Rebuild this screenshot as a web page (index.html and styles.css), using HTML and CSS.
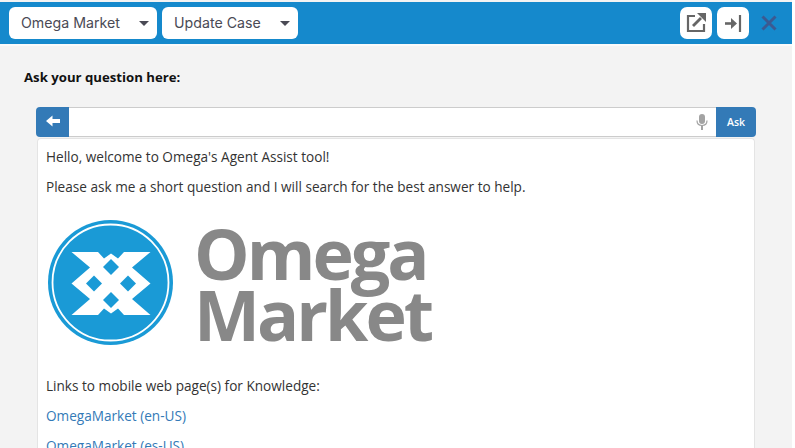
FILE: index.html
```html
<!DOCTYPE html>
<html lang="en">
<head>
  <meta charset="UTF-8" />
  <title>Agent Assist</title>
  <link rel="stylesheet" href="styles.css">
</head>
<body>
  <div class="page">
    <div class="topbar">
      <div class="select select-market">Omega Market<span class="caret"></span></div>
      <div class="select select-case">Update Case<span class="caret"></span></div>
      <div class="tools">
        <div class="tool-btn">
          <svg width="24" height="24" viewBox="0 0 24 24" fill="none" stroke="#666" stroke-width="2.2">
            <path d="M11 5H4V20H20V13"/>
            <path d="M9 15L17 7" stroke-width="2.800"/>
            <path d="M13 2H22V11Z" fill="#666" stroke="none"/>
          </svg>
        </div>
        <div class="tool-btn">
          <svg width="22" height="22" viewBox="0 0 22 22" fill="none" stroke="#666">
            <path d="M3 11.500H11" stroke-width="2.600"/>
            <path d="M9 6L15 11.500L9 17Z" fill="#666" stroke="none"/>
            <path d="M18 3V20" stroke-width="2.200"/>
          </svg>
        </div>
        <svg class="close-icon" width="18" height="18" viewBox="0 0 18 18" stroke="#3b5a92" stroke-width="3" fill="none">
          <path d="M2.500 2.500L15.500 15.500M15.500 2.500L2.500 15.500"/>
        </svg>
      </div>
    </div>

    <div class="main">
      <div class="ask-label">Ask your question here:</div>
      <div class="ask-row">
        <button class="back-btn">
          <svg width="14" height="12" viewBox="0 0 14 12" fill="#fff"><path d="M0 6L6.500 0.500V4H14V8H6.500V11.500Z"/></svg>
        </button>
        <div class="ask-input">
          <svg width="12" height="16" viewBox="0 0 12 16" fill="none" stroke="#a3a3a3">
            <rect x="3" y="0" width="6" height="10" rx="3" fill="#a3a3a3" stroke="none"/>
            <path d="M1 6.500C1 10 3 11.500 6 11.500C9 11.500 11 10 11 6.500" stroke-width="1.200"/>
            <path d="M6 11.500V16" stroke-width="2"/>
          </svg>
        </div>
        <button class="ask-btn">Ask</button>
      </div>
      <div class="answer">
        <p>Hello, welcome to Omega's Agent Assist tool!</p>
        <p>Please ask me a short question and I will search for the best answer to help.</p>
        <div class="logo">
          <svg width="125" height="125" viewBox="0 0 125 125">
            <circle cx="62.500" cy="62.500" r="62.500" fill="#1a9ad6"/>
            <circle cx="62.500" cy="62.500" r="58" fill="none" stroke="#fff" stroke-width="1.800"/>
            <g transform="translate(63 63.500)">
              <path fill="#fff" fill-rule="evenodd" d="M-39.500 -31.500H-13L-7 -25L0 -30L7 -25L13 -31.500H39.500L21 -16L39.500 0L21 15.500L39.500 31.500H13L7 25L0 30L-7 25L-13 31.500H-39.500L-21 15.500L-39.500 0L-21 -16Z
                M0 -24.500L-8 -16.500L0 -8.500L8 -16.500Z M-17 -8L-25 0L-17 8L-9 0Z M17 -8L9 0L17 8L25 0Z M0 8.500L-8 16.500L0 24.500L8 16.500Z"/>
            </g>
          </svg>
          <div class="logo-text">Omega<br />Market</div>
        </div>
        <p>Links to mobile web page(s) for Knowledge:</p>
        <p><a href="#">OmegaMarket (en-US)</a></p>
        <p><a href="#">OmegaMarket (es-US)</a></p>
      </div>
    </div>
  </div>
</body>
</html>
```

FILE: styles.css
```css
body {
  margin: 0;
  height: 448px;
  overflow: hidden;
  background: #fff;
  font-family: "Open Sans", "Liberation Sans", sans-serif;
  color: #333;
}
.page {
  width: 792px;
  height: 448px;
  background: #f3f3f3;
  overflow: hidden;
}
.topbar {
  display: flex;
  align-items: center;
  gap: 5px;
  height: 42px;
  margin-top: 2px;
  padding: 0 0 0 9px;
  background: #1589cc;
  border-bottom: 2px solid #fafafa;
}
.select {
  display: flex;
  align-items: center;
  justify-content: space-between;
  box-sizing: border-box;
  height: 32px;
  padding: 0 8px 2px 12px;
  background: #fff;
  border-radius: 6px;
  font-family: Inter, sans-serif;
  font-size: 14.2px;
  color: #4a4a55;
}
.select-market {
  width: 148px;
}
.select-case {
  width: 136px;
}
.caret {
  width: 0;
  height: 0;
  margin-top: 3px;
  border-left: 5px solid transparent;
  border-right: 5px solid transparent;
  border-top: 5px solid #4a4a55;
}
.tools {
  display: flex;
  align-items: center;
  gap: 5px;
  margin-left: auto;
}
.tool-btn {
  display: flex;
  align-items: center;
  justify-content: center;
  width: 32px;
  height: 32px;
  background: #fff;
  border-radius: 7px;
}
.close-icon {
  margin: 0 14px 0 6px;
}
.main {
  padding: 22px 36px 0;
}
.ask-label {
  margin: 0 0 21px -12px;
  font-size: 13.2px;
  font-weight: 700;
  line-height: 18px;
  color: #111;
}
.ask-row {
  display: flex;
  height: 30px;
}
.back-btn, .ask-btn {
  border: none;
  padding: 0;
  background: #337ab7;
  color: #fff;
  font-family: inherit;
}
.back-btn {
  width: 33px;
  border-radius: 4px 0 0 4px;
}
.ask-input {
  flex: 1;
  display: flex;
  align-items: center;
  justify-content: flex-end;
  padding-right: 8px;
  background: #fff;
  border-top: 1px solid #ccc;
  border-bottom: 1px solid #ccc;
}
.ask-btn {
  width: 40px;
  border-radius: 0 4px 4px 0;
  font-size: 10.5px;
  font-weight: 600;
}
.answer {
  height: 320px;
  margin: 1px 1px 0;
  padding: 8px 8px 0;
  background: #fff;
  border: 1px solid #e4e4e4;
  border-bottom: none;
  border-radius: 4px 4px 0 0;
  font-size: 13.6px;
  line-height: 20px;
  box-sizing: border-box;
}
.answer p {
  margin: 0 0 10px;
}
.answer a {
  color: #337ab7;
  text-decoration: none;
}
.logo {
  display: flex;
  align-items: flex-start;
  gap: 21px;
  margin: 23px 0 31px 2px;
}
.logo-text {
  margin-top: 3px;
  font-size: 70px;
  font-weight: 700;
  line-height: 61px;
  letter-spacing: -3px;
  color: #888;
}
```
